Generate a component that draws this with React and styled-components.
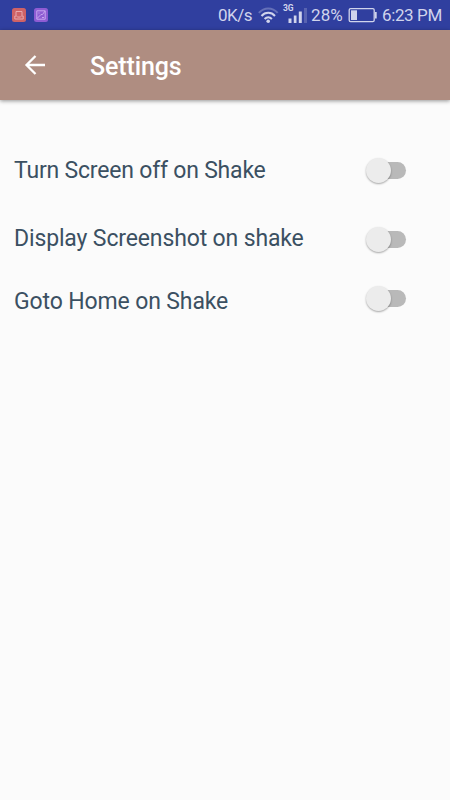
import React, { useState } from "react";
import styled, { createGlobalStyle } from "styled-components";

const GlobalStyle = createGlobalStyle`
  * { box-sizing: border-box; }
  body { margin: 0; background: #fbfbfb; font-family: Roboto, sans-serif; }
`;

const Screen = styled.div`
  width: 450px;
  height: 800px;
  overflow: hidden;
  background: #fbfbfb;
`;

const StatusBar = styled.header`
  display: flex;
  justify-content: space-between;
  height: 30px;
  padding: 0 8px 0 12px;
  background: #303f9f;
  color: #d0d4ec;
`;

const StatusGroup = styled.div`
  display: flex;
  align-items: flex-start;
  gap: ${(p) => p.$gap || 0}px;
  svg { display: block; flex: none; }
`;

const StatusText = styled.span`
  width: ${(p) => p.$width}px;
  margin-left: ${(p) => p.$before || 0}px;
  margin-right: ${(p) => p.$after || 0}px;
  font-size: 17px;
  line-height: 30px;
  letter-spacing: ${(p) => p.$spacing || 0}px;
  white-space: nowrap;
`;

const Toolbar = styled.div`
  display: flex;
  align-items: center;
  height: 70px;
  padding-left: 22px;
  background: #af8d81;
  color: #fff;
  box-shadow: 0 1px 4px rgba(0, 0, 0, 0.42);
`;

const BackButton = styled.button`
  width: 26px;
  height: 26px;
  margin: 0 42px 0 0;
  padding: 0;
  border: 0;
  background: none;
  color: inherit;
  svg { display: block; }
`;

const Title = styled.h1`
  margin: 0;
  padding-top: 3px;
  font-size: 25px;
  font-weight: 500;
  line-height: 32px;
  letter-spacing: -0.12px;
`;

const SettingsList = styled.main`
  display: grid;
  grid-template-rows: 68px 66px 60px;
  padding: 37px 42px 0 14px;
`;

const SettingRow = styled.label`
  display: flex;
  justify-content: space-between;
  align-items: flex-start;
`;

const SettingLabel = styled.span`
  padding-top: ${(p) => p.$top}px;
  color: #3b5062;
  font-size: 23px;
  line-height: 32px;
  letter-spacing: ${(p) => p.$spacing}px;
  white-space: nowrap;
`;

const Switch = styled.button`
  display: flex;
  align-items: center;
  width: 43px;
  height: 25px;
  margin: ${(p) => p.$top}px 0 0;
  padding: 0;
  border: 0;
  background: none;
`;

const Track = styled.span`
  display: flex;
  align-items: center;
  width: 36px;
  height: 17px;
  margin-left: 5px;
  border-radius: 9px;
  background: #b9b9b9;
`;

const Thumb = styled.span`
  flex: none;
  width: 25px;
  height: 25px;
  margin-left: ${(p) => (p.$on ? 12 : -4.5)}px;
  border-radius: 50%;
  background: #ececec;
  box-shadow: 0 1px 2px rgba(0, 0, 0, 0.34);
`;

const ShakeIcon = () => (
  <svg width="14" height="30" viewBox="0 0 14 30">
    <rect x="0" y="8" width="14" height="14" rx="2.5" fill="#cf6266" />
    <path d="M4 15.5V11.5H10V15.5M2.8 16H4.5C5 17.5 9 17.5 9.5 16H11.2V19H2.8Z" fill="none" stroke="#e9a9ae" strokeWidth="1" />
  </svg>
);

const PictureIcon = () => (
  <svg width="14" height="30" viewBox="0 0 14 30">
    <rect x="0" y="8" width="14" height="14" rx="2.5" fill="#8e5cd3" />
    <path d="M2.8 10.8H11.2V19.2H2.8ZM3 18.5L7 14.5H8.5L11 11M5 12.5V13.5M8 17.5H10" fill="none" stroke="#c8a6ef" strokeWidth="1" />
  </svg>
);

const WifiIcon = () => (
  <svg width="22" height="30" viewBox="0 0 22 30">
    <g fill="none" strokeWidth="2">
      <path d="M0.8 12.9C6.3 7 14.2 7 19.7 12.9" stroke="#6570b8" />
      <path d="M3.5 16C7.2 11.8 13.3 11.8 17 16" stroke="#d0d4ec" />
      <path d="M6.6 19C8.9 16.5 11.6 16.5 13.9 19" stroke="#d0d4ec" />
    </g>
    <circle cx="10.2" cy="21.2" r="1.8" fill="#d0d4ec" />
  </svg>
);

const SignalStack = styled.div`
  position: relative;
  width: 25px;
  height: 30px;
  margin: 0 3px;
`;

const NetworkTag = styled.span`
  position: absolute;
  left: 0;
  top: 3px;
  font-size: 8.5px;
  font-weight: 700;
  line-height: 10px;
  letter-spacing: -0.2px;
`;

const SignalIcon = () => (
  <svg width="25" height="30" viewBox="0 0 25 30">
    <path d="M5.5 18.5H8.5V23H5.5ZM10.8 15.5H13.5V23H10.8ZM15.8 11.5H18.8V23H15.8Z" fill="#d0d4ec" />
    <path d="M21 8H24V23H21Z" fill="#5863b1" />
  </svg>
);

const BatteryIcon = () => (
  <svg width="29" height="30" viewBox="0 0 29 30">
    <rect x="1.2" y="8.7" width="25" height="13" rx="1.4" fill="none" stroke="#d0d4ec" strokeWidth="1.3" />
    <path d="M3 10.3H9V20H3Z" fill="#d0d4ec" />
    <path d="M27 12H28.7V18.5H27Z" fill="#d0d4ec" />
  </svg>
);

const BackArrow = () => (
  <svg width="26" height="26" viewBox="0 0 26 26">
    <path d="M23 13H4.5M13.5 4L4.5 13L13.5 22" fill="none" stroke="currentColor" strokeWidth="2.3" />
  </svg>
);

const settings = [
  { label: "Turn Screen off on Shake", top: 18, switchTop: 21, spacing: -0.2 },
  { label: "Display Screenshot on shake", top: 18, switchTop: 22, spacing: -0.14 },
  { label: "Goto Home on Shake", top: 15, switchTop: 15, spacing: -0.13 },
];

function Setting({ label, top, switchTop, spacing }) {
  const [on, setOn] = useState(false);
  return (
    <SettingRow>
      <SettingLabel $top={top} $spacing={spacing}>{label}</SettingLabel>
      <Switch $top={switchTop} role="switch" aria-checked={on} aria-label={label} onClick={() => setOn(!on)}>
        <Track><Thumb $on={on} /></Track>
      </Switch>
    </SettingRow>
  );
}

export default function App() {
  return (
    <Screen>
      <GlobalStyle />
      <StatusBar>
        <StatusGroup $gap={8}>
          <ShakeIcon />
          <PictureIcon />
        </StatusGroup>
        <StatusGroup>
          <StatusText $width={35} $after={5} $spacing={-0.5}>0K/s</StatusText>
          <WifiIcon />
          <SignalStack>
            <NetworkTag>3G</NetworkTag>
            <SignalIcon />
          </SignalStack>
          <StatusText $width={33} $after={4} $spacing={0.1}>28%</StatusText>
          <BatteryIcon />
          <StatusText as="time" $width={60} $before={5} $spacing={-0.38}>6:23 PM</StatusText>
        </StatusGroup>
      </StatusBar>
      <Toolbar>
        <BackButton aria-label="Back"><BackArrow /></BackButton>
        <Title>Settings</Title>
      </Toolbar>
      <SettingsList>
        {settings.map((item) => <Setting key={item.label} {...item} />)}
      </SettingsList>
    </Screen>
  );
}
